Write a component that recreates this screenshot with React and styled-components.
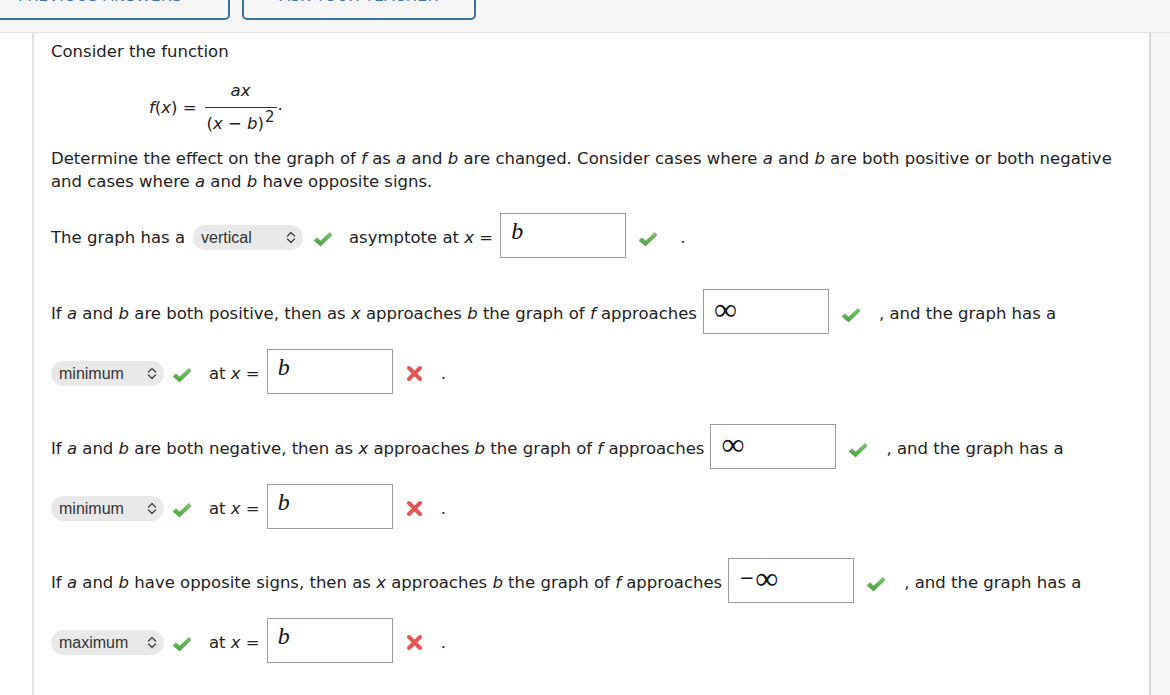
import React from "react";
import styled, { createGlobalStyle } from "styled-components";

const GlobalStyle = createGlobalStyle`
  html, body {
    margin: 0;
    padding: 0;
    background: #ffffff;
  }
  body {
    font-family: "DejaVu Sans", Verdana, sans-serif;
    color: #222;
  }
`;

const Page = styled.div`
  width: 1170px;
  height: 695px;
  overflow: hidden;
  display: flex;
  flex-direction: column;
`;

const TopBar = styled.div`
  height: 32px;
  background: #f5f5f5;
  border-bottom: 1px solid #e4e4e4;
  display: flex;
  align-items: flex-end;
  gap: 12px;
  overflow: hidden;
`;

const BarButton = styled.button`
  height: 40px;
  margin-bottom: 12px;
  margin-left: ${(p) => p.$offset || 0}px;
  width: ${(p) => p.$w}px;
  background: #f5f5f5;
  border: 2px solid #3d6fa6;
  border-radius: 5px;
  color: #3d6fa6;
  font-family: "DejaVu Sans", Verdana, sans-serif;
  font-size: 15px;
  text-transform: uppercase;
  letter-spacing: 0.5px;
  display: flex;
  align-items: flex-end;
  justify-content: center;
  padding: 0 0 14px;
  line-height: 1;
`;

const Body = styled.div`
  flex: 1;
  display: flex;
`;

const Gutter = styled.div`
  width: 32px;
  background: #fff;
`;

const Panel = styled.div`
  box-sizing: border-box;
  width: 1119px;
  background: #fff;
  border-left: 2px solid #e2e2e2;
  border-right: 2px solid #d8d8d8;
  padding: 9px 0 0 17px;
  font-size: 16.5px;
  line-height: 20px;
`;

const Side = styled.div`
  flex: 1;
  background: #f6f6f6;
`;

const Line = styled.div`
  margin-top: ${(p) => p.$mt || 0}px;
`;

const Para = styled.div`
  margin-top: ${(p) => p.$mt || 0}px;
  line-height: 23px;
  width: 1080px;
`;

const I = styled.i`
  font-style: italic;
`;

const Formula = styled.div`
  margin: 19px 0 0 98px;
  display: flex;
  align-items: center;
`;

const Lhs = styled.span`
  margin-right: 8px;
`;

const Frac = styled.span`
  display: inline-flex;
  flex-direction: column;
  align-items: center;
`;

const Num = styled.span`
  padding: 0 0 6px;
`;

const Den = styled.span`
  border-top: 1px solid #333;
  padding: 6px 2px 0;
`;

const Sup = styled.sup`
  font-size: 15px;
  line-height: 0;
  position: relative;
  top: -7px;
  vertical-align: baseline;
  margin-left: 1px;
`;

const Dot = styled.span`
  align-self: center;
  margin-left: 1px;
  margin-top: -6px;
`;

const Row = styled.div`
  display: flex;
  align-items: center;
  height: 44px;
  margin-top: ${(p) => p.$mt || 0}px;
  white-space: nowrap;
`;

const Text = styled.span`
  margin-left: ${(p) => p.$ml || 0}px;
  margin-top: 6px;
`;

const SelectBox = styled.div`
  display: inline-flex;
  align-items: center;
  justify-content: space-between;
  box-sizing: border-box;
  width: ${(p) => p.$w}px;
  height: 25px;
  margin-left: ${(p) => p.$ml || 0}px;
  margin-top: ${(p) => p.$mt || 0}px;
  padding: 0 7px 0 8px;
  background: #e9e9e9;
  border-radius: 13px;
  font-family: "Liberation Sans", Arial, sans-serif;
  font-size: 16px;
  color: #333;
`;

const AnswerBox = styled.div`
  box-sizing: border-box;
  width: 126px;
  height: 45px;
  margin-left: ${(p) => p.$ml || 0}px;
  border: 1px solid #9a9a9a;
  background: #fff;
  padding: 5px 0 0 10px;
  font-family: "Liberation Serif", "Times New Roman", serif;
  font-size: 24px;
  line-height: 24px;
  color: #111;
  display: flex;
  align-items: flex-start;
`;

const MathB = styled.span`
  font-style: italic;
`;

const Minus = styled.span`
  font-family: "DejaVu Sans", sans-serif;
  font-size: 18px;
  margin: 0 1px 0 0;
  line-height: 24px;
  position: relative;
  top: 2px;
`;

const Infinity = styled.span`
  font-family: "Liberation Serif", serif;
  font-size: 32px;
  line-height: 24px;
  position: relative;
  top: 2px;
`;

const IconWrap = styled.span`
  display: inline-flex;
  margin-left: ${(p) => p.$ml || 0}px;
  margin-top: ${(p) => p.$mt || 0}px;
`;

const Chevrons = () => (
  <svg width="10" height="13" viewBox="0 0 10 13">
    <path
      d="M1.5 5 L5 1.5 L8.5 5 M1.5 8 L5 11.5 L8.5 8"
      fill="none"
      stroke="#444"
      strokeWidth="1.4"
      strokeLinecap="round"
      strokeLinejoin="round"
    />
  </svg>
);

const Check = ({ ml, mt }) => (
  <IconWrap $ml={ml} $mt={mt}>
    <svg width="20" height="16" viewBox="0 0 20 16">
      <defs>
        <linearGradient id="chk" x1="0" y1="0" x2="0" y2="1">
          <stop offset="0" stopColor="#7ccb6d" />
          <stop offset="1" stopColor="#4a9f3f" />
        </linearGradient>
      </defs>
      <path
        d="M1 9.5 L4 6.8 L7.6 10 L17 1.5 L19 4 L7.6 15 Z"
        fill="url(#chk)"
        stroke="#4c9a43"
        strokeWidth="0.6"
        strokeLinejoin="round"
      />
    </svg>
  </IconWrap>
);

const Cross = ({ ml }) => (
  <IconWrap $ml={ml} $mt={5}>
    <svg width="17" height="17" viewBox="0 0 17 17">
      <path
        d="M3 3 L14 14 M14 3 L3 14"
        stroke="#e25858"
        strokeWidth="4"
        strokeLinecap="round"
      />
    </svg>
  </IconWrap>
);

const Select = ({ label, w, ml }) => (
  <SelectBox $w={w} $ml={ml} $mt={5}>
    <span>{label}</span>
    <Chevrons />
  </SelectBox>
);

const Box = ({ children, ml }) => <AnswerBox $ml={ml}>{children}</AnswerBox>;

const B = () => <MathB>b</MathB>;

const LimitRow = ({ lead, ml, value, mt }) => (
  <Row $mt={mt}>
    <Text>{lead}</Text>
    <Box ml={ml}>{value}</Box>
    <Check ml={12} mt={8} />
    <Text $ml={18}>, and the graph has a</Text>
  </Row>
);

const ExtremumRow = ({ label, w }) => (
  <Row $mt={16}>
    <Select label={label} w={w} ml={0} />
    <Check ml={8} mt={8} />
    <Text $ml={17}>
      at <I>x</I> =
    </Text>
    <Box ml={7}>
      <B />
    </Box>
    <Cross ml={13} />
    <Text $ml={18}>.</Text>
  </Row>
);

export default function App() {
  return (
    <Page>
      <GlobalStyle />
      <TopBar>
        <BarButton $w={260} $offset={-30}>Previous Answers</BarButton>
        <BarButton $w={234}>Ask Your Teacher</BarButton>
      </TopBar>
      <Body>
        <Gutter />
        <Panel>
          <Line>Consider the function</Line>
          <Formula>
            <Lhs>
              <I>f</I>(<I>x</I>) =
            </Lhs>
            <Frac>
              <Num>
                <I>ax</I>
              </Num>
              <Den>
                (<I>x</I> − <I>b</I>)<Sup>2</Sup>
              </Den>
            </Frac>
            <Dot>.</Dot>
          </Formula>
          <Para $mt={13}>
            Determine the effect on the graph of <I>f</I> as <I>a</I> and <I>b</I> are changed.
            Consider cases where <I>a</I> and <I>b</I> are both positive or both negative and
            cases where <I>a</I> and <I>b</I> have opposite signs.
          </Para>
          <Row $mt={20}>
            <Text>The graph has a</Text>
            <Select label="vertical" w={110} ml={8} />
            <Check ml={10} mt={8} />
            <Text $ml={16}>
              asymptote at <I>x</I> =
            </Text>
            <Box ml={7}>
              <B />
            </Box>
            <Check ml={12} mt={8} />
            <Text $ml={22}>.</Text>
          </Row>

          <LimitRow
            mt={32}
            ml={6}
            lead={
              <>
                If <I>a</I> and <I>b</I> are both positive, then as <I>x</I> approaches <I>b</I> the
                graph of <I>f</I> approaches
              </>
            }
            value={<Infinity>∞</Infinity>}
          />
          <ExtremumRow label="minimum" w={113} />

          <LimitRow
            mt={31}
            ml={6}
            lead={
              <>
                If <I>a</I> and <I>b</I> are both negative, then as <I>x</I> approaches <I>b</I> the
                graph of <I>f</I> approaches
              </>
            }
            value={<Infinity>∞</Infinity>}
          />
          <ExtremumRow label="minimum" w={113} />

          <LimitRow
            mt={30}
            ml={6}
            lead={
              <>
                If <I>a</I> and <I>b</I> have opposite signs, then as <I>x</I> approaches <I>b</I> the
                graph of <I>f</I> approaches
              </>
            }
            value={
              <>
                <Minus>−</Minus>
                <Infinity>∞</Infinity>
              </>
            }
          />
          <ExtremumRow label="maximum" w={113} />
        </Panel>
        <Side />
      </Body>
    </Page>
  );
}
